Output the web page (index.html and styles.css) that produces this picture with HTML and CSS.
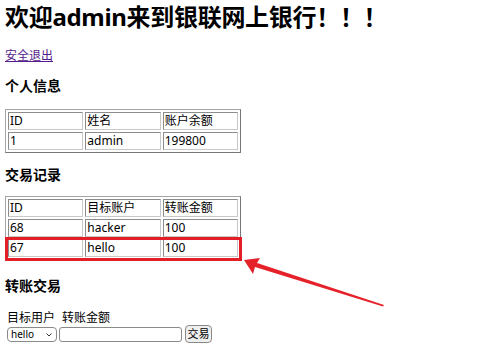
FILE: index.html
```html
<!DOCTYPE html>
<html lang="zh-CN">
<head>
<meta charset="utf-8">
<title>银联网上银行</title>
<link rel="stylesheet" href="styles.css">
</head>
<body>
<main class="page">
  <h1 class="title">欢迎admin来到银联网上银行！！！</h1>
  <a class="logout" href="#">安全退出</a>

  <h3 class="section">个人信息</h3>
  <table class="grid">
    <tr><td>ID</td><td>姓名</td><td>账户余额</td></tr>
    <tr><td>1</td><td>admin</td><td>199800</td></tr>
  </table>

  <h3 class="section">交易记录</h3>
  <div class="records">
    <table class="grid">
      <tr><td>ID</td><td>目标账户</td><td>转账金额</td></tr>
      <tr><td>68</td><td>hacker</td><td>100</td></tr>
      <tr><td>67</td><td>hello</td><td>100</td></tr>
    </table>
    <div class="highlight"></div>
    <svg class="arrow" width="145" height="56" viewBox="0 0 145 56">
      <polygon points="0,5 16,3 13,8 140,50 139,51.5 11,12 9,19" fill="#e5222a"/>
    </svg>
  </div>

  <h3 class="section transfer-title">转账交易</h3>
  <form class="transfer">
    <div class="labels"><span>目标用户</span><span>转账金额</span></div>
    <div class="controls">
      <span class="select-wrap">
        <select class="pick"><option>hello</option><option>hacker</option></select>
        <svg class="chev" width="6" height="4" viewBox="0 0 6 4"><path d="M0.5 0.5 L3 3 L5.5 0.5" fill="none" stroke="#333" stroke-width="1"/></svg>
      </span>
      <input class="amount" type="text">
      <button class="go" type="button">交易</button>
    </div>
  </form>
</main>
</body>
</html>
```
FILE: styles.css
```css
html, body {
  margin: 0;
  padding: 0;
  background: #fff;
}
body {
  font-family: "Noto Sans", "Noto Sans CJK SC", sans-serif;
  font-size: 12px;
  color: #000;
}
.page {
  padding: 3px 0 0 5px;
  display: flex;
  flex-direction: column;
  align-items: flex-start;
}
.title {
  margin: 0;
  font-size: 24px;
  line-height: 28px;
  font-weight: bold;
  letter-spacing: -0.3px;
}
.logout {
  margin-top: 17px;
  line-height: 16px;
  color: #551a8b;
  text-decoration: underline;
}
.section {
  margin: 13px 0 14px 0;
  font-size: 14px;
  line-height: 18px;
  font-weight: bold;
}
.grid {
  width: 236px;
  table-layout: fixed;
  border: 1px solid #a3a3a3;
  border-bottom-color: #777;
  border-right-color: #777;
  border-spacing: 2px;
}
.grid td {
  border: 1px solid #8c8c8c;
  border-bottom-color: #c8c8c8;
  border-right-color: #c8c8c8;
  padding: 1px;
  line-height: 14px;
  height: 14px;
  white-space: nowrap;
}
.records {
  position: relative;
  margin-top: -2px;
}
.highlight {
  position: absolute;
  left: 0;
  top: 41px;
  width: 231px;
  height: 18px;
  border: 3px solid #e31e26;
}
.arrow {
  position: absolute;
  left: 239px;
  top: 59px;
  overflow: visible;
}
.transfer-title {
  margin-top: 17px;
  margin-bottom: 15px;
}
.transfer {
  margin: 0 0 0 2px;
}
.labels {
  display: flex;
  gap: 7px;
  line-height: 15px;
  font-size: 12px;
}
.controls {
  display: flex;
  align-items: center;
  gap: 2px;
  margin-top: 0;
}
.select-wrap {
  position: relative;
  display: inline-flex;
}
.pick {
  appearance: none;
  -webkit-appearance: none;
  width: 50px;
  height: 15px;
  font-size: 10px;
  line-height: 13px;
  padding: 0 0 0 3px;
  border: 1px solid #8a8a8a;
  border-radius: 4px;
  background: #fff;
  color: #000;
  font-family: "Noto Sans", "Noto Sans CJK SC", sans-serif;
}
.chev {
  position: absolute;
  right: 5px;
  top: 6px;
}
.amount {
  width: 119px;
  height: 11px;
  padding: 1px;
  border: 1px solid #8a8a8a;
  border-radius: 3px;
  font-size: 10px;
}
.go {
  height: 18px;
  width: 27px;
  padding: 0;
  margin-left: 1px;
  font-size: 11px;
  line-height: 14px;
  border: 1px solid #8a8a8a;
  border-radius: 4px;
  background: #efefef;
  font-family: "Noto Sans", "Noto Sans CJK SC", sans-serif;
}
```
